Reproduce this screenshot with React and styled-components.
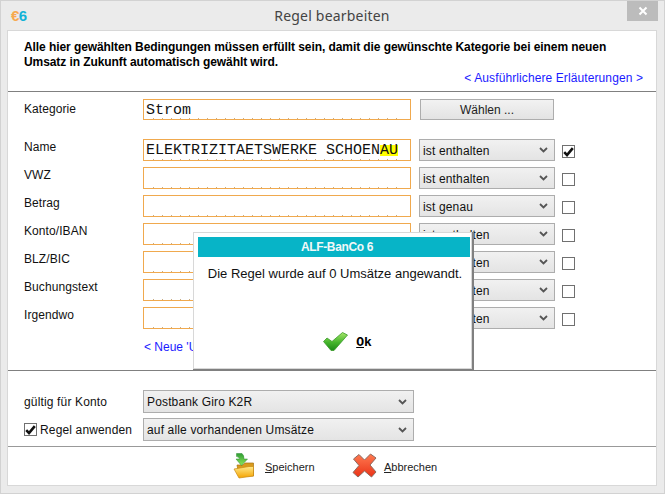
import React from 'react'
import styled, { createGlobalStyle } from 'styled-components'

const Global = createGlobalStyle`
  html, body {
    margin: 0;
    padding: 0;
    background: #ebebeb;
  }
  * {
    box-sizing: border-box;
  }
`

const Window = styled.div`
  position: relative;
  width: 665px;
  height: 494px;
  display: flex;
  flex-direction: column;
  padding: 0 7px 7px 6px;
  background: #ebebeb;
  border: 1px solid #d2d2d2;
  font-family: 'Liberation Sans', Arial, sans-serif;
  font-size: 12px;
  color: #111;
  overflow: hidden;
`

const TitleBar = styled.div`
  position: relative;
  flex: 0 0 29px;
  display: flex;
  align-items: center;
  justify-content: center;
`

const Logo = styled.div`
  position: absolute;
  left: 4px;
  top: 6px;
  font-family: 'Liberation Sans', Arial, sans-serif;
  font-size: 15px;
  font-weight: 700;
  letter-spacing: -0.5px;
  color: #f7a94f;

  span {
    color: #12b2d6;
  }
`

const Title = styled.div`
  font-family: 'Noto Sans', sans-serif;
  font-size: 14px;
  letter-spacing: 0.2px;
  color: #444;
`

const CloseButton = styled.div`
  position: absolute;
  right: -1px;
  top: 0;
  width: 31px;
  height: 20px;
  display: flex;
  align-items: center;
  justify-content: center;
  background: #bcbcbc;
`

const Panel = styled.div`
  flex: 1;
  display: flex;
  flex-direction: column;
  background: #fff;
  border: 1px solid #d8d8d8;
`

const Intro = styled.div`
  height: 61px;
  padding: 9px 16px 0;
  display: flex;
  flex-direction: column;
  border-bottom: 1px solid #808080;
`

const IntroText = styled.div`
  font-weight: 700;
  line-height: 15px;
  letter-spacing: -0.08px;
  color: #000;
`

const InfoLink = styled.div`
  margin-top: 1px;
  margin-right: -3px;
  text-align: right;
  letter-spacing: 0.1px;
  color: #1a1aff;
`

const Form = styled.div`
  height: 279px;
  padding: 7px 16px 0;
  border-bottom: 1px solid #808080;
`

const Row = styled.div`
  display: grid;
  grid-template-columns: 111px 268px 136px 14px;
  column-gap: 8px;
  height: 22px;
  margin-bottom: 6px;
`

const CategoryRow = styled(Row)`
  margin-bottom: 18px;
`

const Label = styled.div`
  padding-top: ${p => p.$top}px;
  margin-right: -8px;
  letter-spacing: 0.08px;
`

const Field = styled.div`
  height: ${p => p.$height || 22}px;
  padding: 0 2px;
  border: 1px solid #f0a94e;
  background: #fff;
  font-family: 'Liberation Mono', monospace;
  font-size: 15px;
  line-height: 21px;
  color: #111;
  white-space: nowrap;
  overflow: hidden;
`

const Ticks = styled.div`
  height: 100%;
  margin: 0 -2px;
  padding: 0 2px;
  background-image: repeating-linear-gradient(
    90deg,
    transparent 0,
    transparent 8px,
    #c9ad85 8px,
    #c9ad85 9px
  );
  background-size: 256px 1px;
  background-repeat: no-repeat;
  background-position: 1px bottom;
`

const Mark = styled.span`
  background: linear-gradient(
    transparent 3px,
    #ffff00 3px,
    #ffff00 14px,
    transparent 14px
  );
`

const PlainButton = styled.div`
  width: 134px;
  height: 21px;
  margin-left: 1px;
  display: flex;
  align-items: center;
  justify-content: center;
  background: linear-gradient(#f2f2f2, #e3e3e3);
  border: 1px solid #adadad;
  color: #222;
`

const SelectBox = styled.div`
  position: relative;
  width: ${p => p.$width || 136}px;
  height: ${p => p.$height || 22}px;
  display: flex;
  align-items: center;
  padding: 1px 0 0 3px;
  background: linear-gradient(#f1f1f1, #e4e4e4);
  border: 1px solid #adadad;
  letter-spacing: 0.15px;
  color: #111;
  white-space: nowrap;
`

const Chevron = styled.svg`
  position: absolute;
  right: 6px;
  top: 50%;
  margin-top: -3px;
`

const CheckCell = styled.div`
  display: flex;
  align-items: center;
  height: 100%;
  margin-left: -1px;
  padding-top: 3px;
`

const Box = styled.div`
  width: 13px;
  height: 13px;
  flex: none;
  display: flex;
  align-items: center;
  justify-content: center;
  background: #fff;
  border: 1px solid #707070;
`

const RuleLink = styled.div`
  margin: 11px 0 0 119px;
  padding-left: 1px;
  color: #1a1aff;
`

const Settings = styled.div`
  height: 76px;
  padding: 19px 16px 0;
  border-bottom: 1px solid #999;
`

const SettingsRow = styled.div`
  display: flex;
  align-items: center;
  height: 23px;
  margin-bottom: 5px;
`

const SettingsLabel = styled.div`
  width: 119px;
  display: flex;
  align-items: center;
  gap: 3px;
  letter-spacing: 0.15px;
  white-space: nowrap;
`

const Footer = styled.div`
  flex: 1;
  display: flex;
  align-items: flex-start;
  padding: 6px 0 0 225px;
`

const Action = styled.div`
  display: flex;
  align-items: center;
  width: ${p => p.$width}px;
  font-size: 11px;
  color: #222;

  svg {
    flex: none;
  }
`

const ActionText = styled.span`
  margin-left: ${p => p.$gap}px;
  margin-top: 2px;
`

const Dialog = styled.div`
  position: absolute;
  left: 192px;
  top: 231px;
  width: 279px;
  height: 137px;
  display: flex;
  flex-direction: column;
  padding: 4px 1px 0 4px;
  background: #fff;
  border: 1px solid #d8d8d8;
  box-shadow: 1px 1px 0 1px #808080;
`

const DialogHead = styled.div`
  height: 20px;
  display: flex;
  align-items: center;
  justify-content: center;
  padding-left: 6px;
  background: #07b4c7;
  color: #f2f8f8;
  font-weight: 700;
  letter-spacing: -0.35px;
`

const DialogText = styled.div`
  margin-top: 9px;
  padding-left: 2px;
  text-align: center;
  font-size: 13px;
  color: #111;
`

const DialogAction = styled.div`
  margin-top: 51px;
  display: flex;
  align-items: center;
  justify-content: center;
  padding-left: 27px;
  gap: 8px;
`

const OkLabel = styled.span`
  margin-top: 1px;
  font-family: 'Liberation Mono', monospace;
  font-weight: 700;
  font-size: 13px;
  color: #000;
`

const ChevronIcon = () => (
  <Chevron width="9" height="6" viewBox="0 0 9 6">
    <path d="M1 1 L4.5 4.5 L8 1" fill="none" stroke="#555" strokeWidth="1.8" />
  </Chevron>
)

const TickIcon = () => (
  <svg width="11" height="10" viewBox="0 0 11 10">
    <path d="M1.2 5.2 L4 8 L9.8 1.2" fill="none" stroke="#111" strokeWidth="2.6" />
  </svg>
)

const CloseIcon = () => (
  <svg width="10" height="10" viewBox="0 0 10 10">
    <path d="M1.5 1.5 L8.5 8.5 M8.5 1.5 L1.5 8.5" stroke="#fff" strokeWidth="2" />
  </svg>
)

const GreenCheck = () => (
  <svg width="25" height="19" viewBox="0 0 25 19">
    <defs>
      <linearGradient id="greenFill" x1="0" y1="0" x2="0" y2="1">
        <stop offset="0" stopColor="#a6e56a" />
        <stop offset="0.55" stopColor="#45b52c" />
        <stop offset="1" stopColor="#1d8a18" />
      </linearGradient>
    </defs>
    <path
      d="M0.5 9.5 L4 6 L9 9.5 L19.5 0.5 L24.5 3 L11 18.5 L8 18.5 Z"
      fill="url(#greenFill)"
      stroke="#3a9a2a"
      strokeWidth="0.8"
      strokeLinejoin="round"
    />
  </svg>
)

const FolderIcon = () => (
  <svg width="22" height="26" viewBox="0 0 22 26">
    <defs>
      <linearGradient id="folderFill" x1="0" y1="0" x2="0" y2="1">
        <stop offset="0" stopColor="#ffe98a" />
        <stop offset="1" stopColor="#f5a300" />
      </linearGradient>
      <linearGradient id="arrowFill" x1="0" y1="0" x2="0" y2="1">
        <stop offset="0" stopColor="#2f9e35" />
        <stop offset="1" stopColor="#8fe85a" />
      </linearGradient>
    </defs>
    <path d="M4 12 L10 12 L12 10 L20.5 10 L20.5 23 L6 23 Z" fill="#d99a1c" stroke="#a87412" strokeWidth="0.7" />
    <path d="M1 16 L16 13.5 L20.5 13.5 L20.5 23 L6 25 Z" fill="url(#folderFill)" stroke="#c98a12" strokeWidth="0.7" />
    <path d="M3.5 0.5 L9 0.5 Q11 2 11 6 L14.5 6 L8.5 12.5 L3 6 L6.5 6 Q6.5 4 3.5 3.5 Z" fill="url(#arrowFill)" stroke="#2d8a30" strokeWidth="0.5" />
  </svg>
)

const RedCross = () => (
  <svg width="25" height="25" viewBox="0 0 25 25">
    <defs>
      <linearGradient id="crossFill" x1="0" y1="0" x2="0" y2="1">
        <stop offset="0" stopColor="#ff7a50" />
        <stop offset="1" stopColor="#ea3318" />
      </linearGradient>
    </defs>
    <path
      d="M1.5 6 L7 1.5 L12.5 7 L18.5 1 L24 5 L18 12 L24 19 L19.5 24 L12.5 18 L6 24 L1 19.5 L7 12.5 Z"
      fill="url(#crossFill)"
      stroke="#8d6a60"
      strokeWidth="1"
      strokeLinejoin="round"
    />
  </svg>
)

const rules = [
  { label: 'Name', value: 'ELEKTRIZITAETSWERKE SCHOEN', mark: 'AU', mode: 'ist enthalten', on: true },
  { label: 'VWZ', mode: 'ist enthalten' },
  { label: 'Betrag', mode: 'ist genau' },
  { label: 'Konto/IBAN', mode: 'ist enthalten' },
  { label: 'BLZ/BIC', mode: 'ist enthalten' },
  { label: 'Buchungstext', mode: 'ist enthalten' },
  { label: 'Irgendwo', mode: 'ist enthalten' },
]

export default function App() {
  return (
    <Window>
      <Global />

      <TitleBar>
        <Logo>€<span>6</span></Logo>
        <Title>Regel bearbeiten</Title>
        <CloseButton><CloseIcon /></CloseButton>
      </TitleBar>

      <Panel>
        <Intro>
          <IntroText>
            Alle hier gewählten Bedingungen müssen erfüllt sein, damit die gewünschte Kategorie bei einem neuen
            <br />
            Umsatz in Zukunft automatisch gewählt wird.
          </IntroText>
          <InfoLink>&lt; Ausführlichere Erläuterungen &gt;</InfoLink>
        </Intro>

        <Form>
          <CategoryRow>
            <Label $top={3}>Kategorie</Label>
            <Field $height={21}><Ticks>Strom</Ticks></Field>
            <PlainButton>Wählen ...</PlainButton>
          </CategoryRow>

          {rules.map(rule => (
            <Row key={rule.label}>
              <Label $top={1}>{rule.label}</Label>
              <Field>
                <Ticks>{rule.value}{rule.mark && <Mark>{rule.mark}</Mark>}</Ticks>
              </Field>
              <SelectBox>
                {rule.mode}
                <ChevronIcon />
              </SelectBox>
              <CheckCell>
                <Box>{rule.on && <TickIcon />}</Box>
              </CheckCell>
            </Row>
          ))}

          <RuleLink>&lt; Neue 'Umsatz'-Regel &gt;</RuleLink>
        </Form>

        <Settings>
          <SettingsRow>
            <SettingsLabel>gültig für Konto</SettingsLabel>
            <SelectBox $width={271} $height={23}>
              Postbank Giro K2R
              <ChevronIcon />
            </SelectBox>
          </SettingsRow>
          <SettingsRow>
            <SettingsLabel>
              <Box><TickIcon /></Box>
              Regel anwenden
            </SettingsLabel>
            <SelectBox $width={271} $height={23}>
              auf alle vorhandenen Umsätze
              <ChevronIcon />
            </SelectBox>
          </SettingsRow>
        </Settings>

        <Footer>
          <Action $width={119}>
            <FolderIcon />
            <ActionText $gap={10}><u>S</u>peichern</ActionText>
          </Action>
          <Action $width={100}>
            <RedCross />
            <ActionText $gap={7}><u>A</u>bbrechen</ActionText>
          </Action>
        </Footer>
      </Panel>

      <Dialog>
        <DialogHead>ALF-BanCo 6</DialogHead>
        <DialogText>Die Regel wurde auf 0 Umsätze angewandt.</DialogText>
        <DialogAction>
          <GreenCheck />
          <OkLabel><u>O</u>k</OkLabel>
        </DialogAction>
      </Dialog>
    </Window>
  )
}
